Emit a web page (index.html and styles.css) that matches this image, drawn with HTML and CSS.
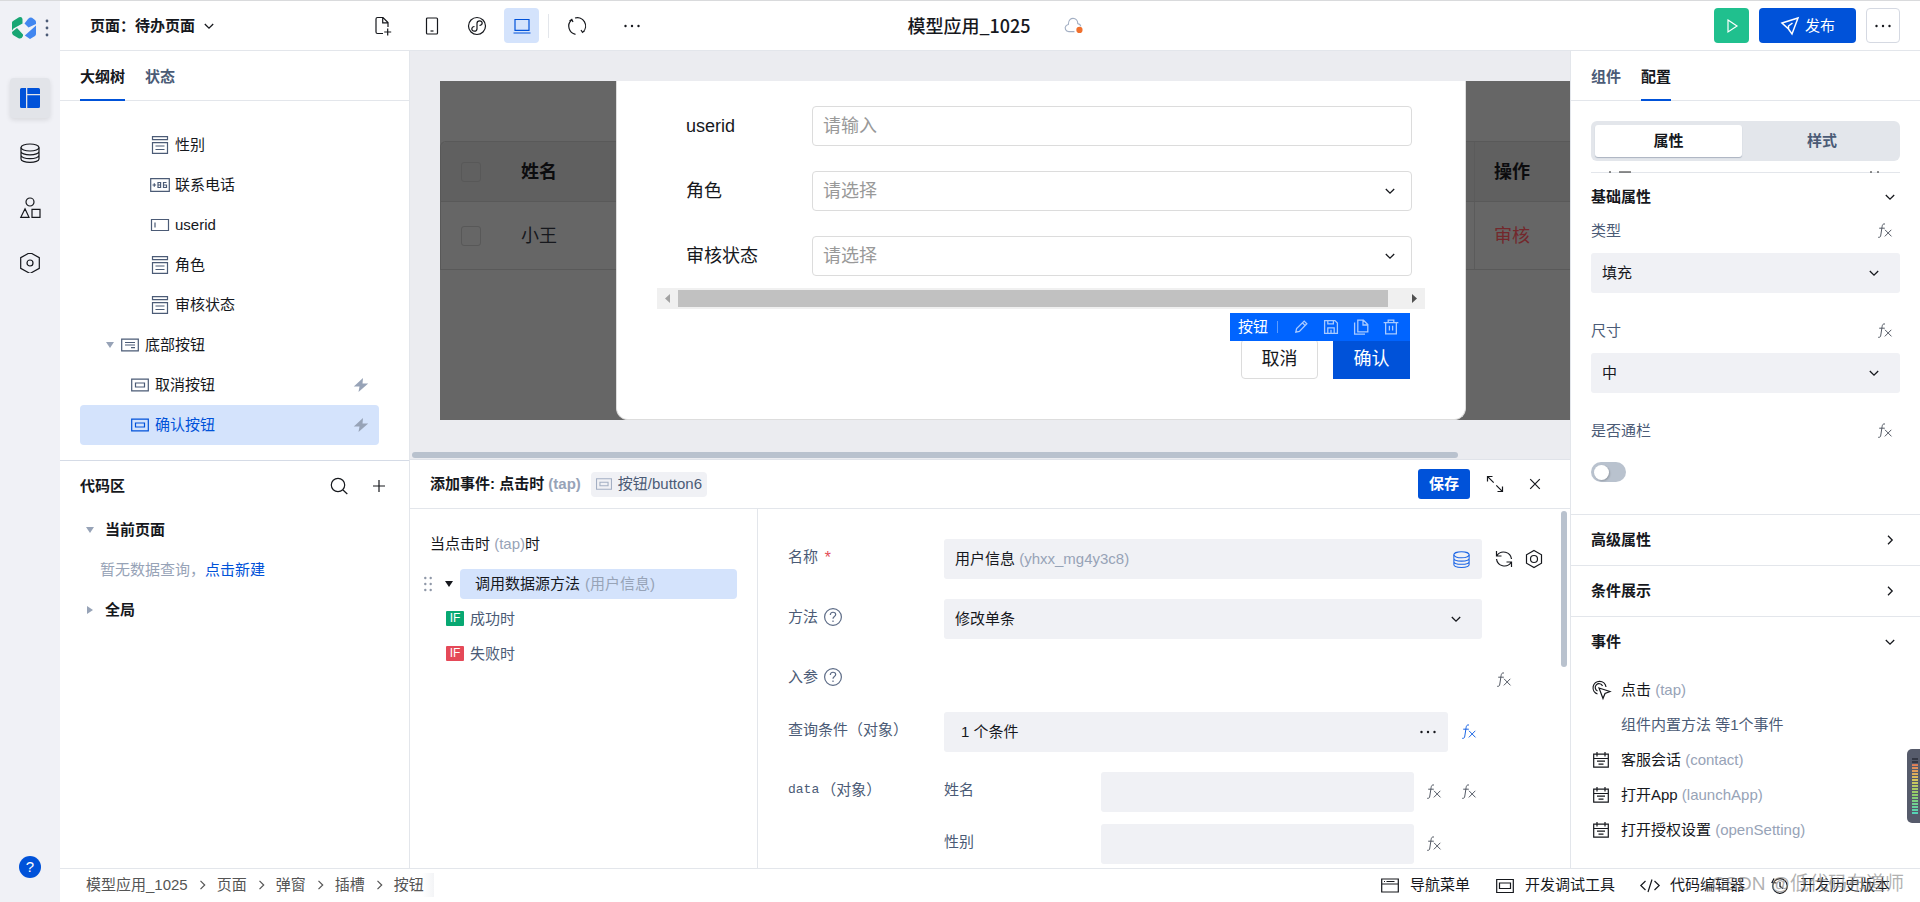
FILE: index.html
```html
<!DOCTYPE html>
<html lang="zh-CN">
<head>
<meta charset="utf-8">
<title>模型应用_1025</title>
<link rel="stylesheet" href="styles.css">
</head>
<body>
<svg class="sprite" aria-hidden="true">
  <symbol id="down" viewBox="0 0 12 12"><path d="M1.800 4 6 8.200 10.200 4"/></symbol>
  <symbol id="right" viewBox="0 0 12 12"><path d="M4 1.800 8.200 6 4 10.200"/></symbol>
  <symbol id="fx" viewBox="0 0 16 16"><path d="M8 1C6 .5 5.400 1.800 5.100 3.600L3.800 12c-.2 1.900-.9 2.600-2.600 2.300M2.200 5.200h5.600M8 6.800l6.500 6.600M14.300 6.800l-6.500 6.600"/></symbol>
  <symbol id="dots" viewBox="0 0 20 20"><g fill="currentColor" stroke="none"><circle cx="3.500" cy="10" r="1.200"/><circle cx="10" cy="10" r="1.200"/><circle cx="16.500" cy="10" r="1.200"/></g></symbol>
  <symbol id="db" viewBox="0 0 20 20"><ellipse cx="10" cy="4.500" rx="9" ry="3.500"/><path d="M1 4.500v11.500c0 1.900 4 3.400 9 3.400s9-1.500 9-3.400V4.500M1 8.500c0 1.900 4 3.400 9 3.400s9-1.500 9-3.400M1 12.300c0 1.900 4 3.400 9 3.400s9-1.500 9-3.400"/></symbol>
  <symbol id="hex" viewBox="0 0 20 20"><path d="M10-.5 19.300 4.700v10.600L10 20.500.7 15.300V4.700z"/><circle cx="10" cy="10" r="3"/></symbol>
  <symbol id="form" viewBox="0 0 20 20"><path d="M2.500 1.700h15v3h-15zM2.500 7.700h15v10.600h-15zM5.500 11h9M5.500 14.500h9"/></symbol>
  <symbol id="btn" viewBox="0 0 20 20"><path d="M1.700 4.200h16.600v11.600H1.700zM5.500 8h9v4h-9z"/></symbol>
  <symbol id="bolt" viewBox="0 0 16 16"><path fill="currentColor" stroke="none" d="M10 1 .8 9.500h5.700L5.500 15l9.700-8.500H9.500z"/></symbol>
  <symbol id="help" viewBox="0 0 20 20"><circle cx="10" cy="10" r="8.400"/><path d="M7.300 8c0-3.600 5.400-3.600 5.400-.4 0 2-2.700 2-2.700 4.200M10 13.400v1.600"/></symbol>
  <symbol id="cal" viewBox="0 0 20 20"><path d="M2.700 4.200h14.600v13H2.700zM2.700 8.500h14.600M6 2v4.500M14 2v4.500M6 11.200h8M7.500 14.200h5"/></symbol>
</svg>

<aside class="rail">
  <div class="brand">
    <svg class="logo" viewBox="0 0 24 22"><path fill="#18a673" d="M0 5.500Q0 4.500 1 4L7 .3Q10-.5 10.500 2v4.500L1.500 11.500 0 13.500zM0 15l5-4 6 6.500V19Q9.500 22.500 6.500 21.300L1 18Q0 17 0 15z"/><path fill="#4287f0" d="M12.500 6.500 16 2Q18 0 20 .7L23 3Q24 4 24 5v2L16.500 10.500zM12.800 18.500 24 8.500V17Q24 18 23 19l-5 3z"/></svg>
    <svg class="grip" viewBox="0 0 4 18"><g fill="#4b5b76"><circle cx="2" cy="2" r="1.400"/><circle cx="2" cy="9" r="1.400"/><circle cx="2" cy="16" r="1.400"/></g></svg>
  </div>
  <nav class="rail-nav">
    <button class="rail-btn active" aria-label="页面设计"><svg viewBox="0 0 20 20"><g fill="#0052d9" stroke="none"><path d="M0 1.500Q0 0 1.500 0H6v20H1.500Q0 20 0 18.500zM7.300 0h11.200Q20 0 20 1.500V6H7.300zM7.300 7.300H20v11.200q0 1.500-1.500 1.500H7.300z"/></g></svg></button>
    <button class="rail-btn" aria-label="数据"><svg><use href="#db"/></svg></button>
    <button class="rail-btn" aria-label="组件"><svg viewBox="0 0 20 20"><circle cx="10" cy="4" r="4"/><path d="M5 10.800 9 19.300H.8zM12 11.300h8v8h-8z"/></svg></button>
    <button class="rail-btn" aria-label="设置"><svg><use href="#hex"/></svg></button>
  </nav>
  <button class="rail-help" aria-label="帮助">?</button>
</aside>

<div class="app">
  <header class="topbar">
    <div class="top-left">
      <button class="page-pick">页面：待办页面 <svg class="i12"><use href="#down"/></svg></button>
      <button class="tool new" aria-label="新建页面"><svg viewBox="0 0 20 20"><path d="M10 17.500H4.500q-1.500 0-1.500-1.500V3q0-1.500 1.500-1.500H10L15 6.500V11M9.700 1.500v5.300H15M14.700 12.500v7M11.200 16h7"/></svg></button>
      <div class="devices">
        <button class="tool" aria-label="手机"><svg viewBox="0 0 20 20"><rect x="4.500" y="2" width="11" height="16" rx="1"/><path d="M8.500 15h3"/></svg></button>
        <button class="tool" aria-label="小程序"><svg viewBox="0 0 20 20"><circle cx="10" cy="10" r="8.500"/><path d="M12.500 9.500c1.500-.2 2.700-1.200 2.700-2.500 0-1.300-1-2.200-2.500-2.200-1.700 0-2.700 1-2.700 2.500v5.400c0 1.500-1.200 2.500-2.700 2.500s-2.500-1-2.500-2.200c0-1.300 1-2.300 2.700-2.500"/></svg></button>
        <button class="tool on" aria-label="电脑"><svg viewBox="0 0 20 20"><path d="M3 3.500h14v10.800H3zM1.500 17h17"/></svg></button>
      </div>
      <span class="divider"></span>
      <button class="tool" aria-label="刷新"><svg viewBox="0 0 20 20"><path d="M4.500 4a8.300 8.300 0 0 0 4 14.300M8 2a8.300 8.300 0 0 1 8 14M2.500 5l2.300-1.500L6 6M17.800 14.500l-2.300 1.800L14 14"/></svg></button>
      <button class="tool more" aria-label="更多"><svg><use href="#dots"/></svg></button>
    </div>
    <div class="top-title"><h1>模型应用_1025</h1>
      <svg class="cloud" viewBox="0 0 20 18"><path stroke="#a3afc3" d="M11 15.500H5C1.500 15.500.3 11.500 2 9.500c.7-1 1.700-1.300 2.500-1.500C4.500 3 7.500 1.500 9.500 1.500c3 0 5 2.500 5 5.500 2 .3 3 1.500 3.300 3"/><circle cx="16.300" cy="13.700" r="3.300" fill="#f0702e" stroke="none"/></svg>
    </div>
    <div class="top-right">
      <button class="run" aria-label="运行"><svg viewBox="0 0 20 20"><path d="M6 4l9 6-9 6z"/></svg></button>
      <button class="publish"><svg viewBox="0 0 20 20"><path d="M2 7 18 2l-6 16-3.500-5zM8.500 13v-3l4-3"/></svg>发布</button>
      <button class="overflow" aria-label="更多操作"><svg><use href="#dots"/></svg></button>
    </div>
  </header>

  <div class="work">
    <section class="left">
      <div class="outline">
        <div class="tabs"><button class="tab active">大纲树</button><button class="tab">状态</button></div>
        <ul class="tree">
          <li class="d3"><svg><use href="#form"/></svg>性别</li>
          <li class="d3"><svg viewBox="0 0 20 20"><path d="M.7 3.700h18.600v12.600H.7z"/><path d="M2.500 10h3.600M4.300 8.200v3.600M8 7.500h2.600v5H8zM8 10h2.600M16.500 7.500h-3v5h3V10h-3"/></svg>联系电话</li>
          <li class="d3"><svg viewBox="0 0 20 20"><path d="M1.500 4.500h17v11h-17zM5 7.500v5"/></svg>userid</li>
          <li class="d3"><svg><use href="#form"/></svg>角色</li>
          <li class="d3"><svg><use href="#form"/></svg>审核状态</li>
          <li class="d1"><i class="caret"></i><svg viewBox="0 0 20 20"><path d="M1.700 4.200h16.600v11.600H1.700zM5 7.500h10M5 10H15M11 12.700h4"/></svg>底部按钮</li>
          <li class="d2"><svg><use href="#btn"/></svg>取消按钮<svg class="bolt"><use href="#bolt"/></svg></li>
          <li class="d2 selected"><svg><use href="#btn"/></svg>确认按钮<svg class="bolt"><use href="#bolt"/></svg></li>
        </ul>
      </div>
      <div class="code">
        <div class="code-head"><h2>代码区</h2>
          <button aria-label="搜索"><svg viewBox="0 0 20 20"><circle cx="9" cy="9" r="6.700"/><path d="M14 14l4.300 4"/></svg></button>
          <button aria-label="新增"><svg viewBox="0 0 20 20"><path d="M10 4v12M4 10h12"/></svg></button>
        </div>
        <div class="code-row"><i class="caret"></i>当前页面</div>
        <p class="code-empty">暂无数据查询，<a href="#new">点击新建</a></p>
        <div class="code-row"><i class="caret side"></i>全局</div>
      </div>
    </section>

    <main class="center">
      <div class="canvas">
        <div class="device">
          <table class="grid">
            <tr><th class="ck"><input type="checkbox" aria-label="全选"></th><th>姓名</th><th class="op">操作</th></tr>
            <tr><td class="ck"><input type="checkbox" aria-label="选择小王"></td><td>小王</td><td class="op"><a href="#audit">审核</a></td></tr>
          </table>
          <div class="dialog">
            <div class="frow"><label for="uid">userid</label><input id="uid" placeholder="请输入"></div>
            <div class="frow"><label for="role">角色</label><span class="pick"><select id="role"><option>请选择</option></select><svg class="i12"><use href="#down"/></svg></span></div>
            <div class="frow"><label for="st">审核状态</label><span class="pick"><select id="st"><option>请选择</option></select><svg class="i12"><use href="#down"/></svg></span></div>
            <div class="hscroll"><svg viewBox="0 0 21 21"><path fill="#a3a3a3" d="M13 6v9l-5-4.500z"/></svg><span class="thumb"></span><svg viewBox="0 0 21 21"><path fill="#505050" d="M8 6v9l5-4.500z"/></svg></div>
            <div class="actions">
              <button class="cancel">取消</button><button class="ok">确认</button>
              <div class="bar"><span>按钮</span>
                <svg viewBox="0 0 20 20"><path d="M3.500 16.500l1-4.500L14 2.700l3.300 3.300L8 15.500zM12 5l3 3"/></svg>
                <svg viewBox="0 0 20 20"><path d="M2 2h13l3 3v13H2zM6 18v-7h8v7M6 2v4h7V2M10 13.500v4"/></svg>
                <svg viewBox="0 0 20 20"><path d="M6 1.500h7L18.500 7v9H6zM12.500 1.500V7.500h6M2 4.500v14.500h13"/></svg>
                <svg viewBox="0 0 20 20"><path d="M.8 4.500h18.400M6.500 4.500V1.500h7V4.500M3.300 4.500v14h13.400V4.500M8 8.500v6M12 8.500v6"/></svg>
              </div>
            </div>
          </div>
        </div>
        <div class="canvas-scroll"></div>
      </div>

      <section class="event">
        <div class="event-head">
          <h2>添加事件: 点击时 <span class="dim">(tap)</span></h2>
          <span class="tag"><svg><use href="#btn"/></svg>按钮/button6</span>
          <button class="save">保存</button>
          <button class="plain" aria-label="展开"><svg viewBox="0 0 20 20"><path d="M2.500 7.500v-5h5M2.700 2.700l6 6M17.500 12.500v5h-5M17.300 17.300l-6-6"/></svg></button>
          <button class="plain" aria-label="关闭"><svg viewBox="0 0 20 20"><path d="M5.200 5.200l9.600 9.600M14.800 5.200l-9.600 9.600"/></svg></button>
        </div>
        <div class="event-body">
          <div class="flow">
            <div class="when">当点击时 <span class="dim">(tap)</span>时</div>
            <div class="step"><svg class="drag" viewBox="0 0 8 16"><g fill="#8f98a8"><circle cx="1.300" cy="2" r="1.200"/><circle cx="6.700" cy="2" r="1.200"/><circle cx="1.300" cy="8" r="1.200"/><circle cx="6.700" cy="8" r="1.200"/><circle cx="1.300" cy="14" r="1.200"/><circle cx="6.700" cy="14" r="1.200"/></g></svg><i class="caret dark"></i><button class="call">调用数据源方法 <span class="dim">(用户信息)</span></button></div>
            <div class="branch"><b>IF</b>成功时</div>
            <div class="branch fail"><b>IF</b>失败时</div>
          </div>
          <div class="params">
            <div class="prow"><span class="plabel">名称<em>*</em></span><button class="field">用户信息&nbsp;<span class="dim">(yhxx_mg4y3c8)</span><svg class="blue"><use href="#db"/></svg></button>
              <span class="acts"><button class="plain" aria-label="刷新"><svg viewBox="0 0 20 20"><path d="M2.500 2v5h5M3 6.500a8 8 0 0 1 14.500 3.500M17.500 18v-5h-5M17 13.500A8 8 0 0 1 2.500 10"/></svg></button><button class="plain" aria-label="设置"><svg viewBox="0 0 20 20"><path d="M10 1.500l7.500 4.300v8.400L10 18.500l-7.500-4.300V5.800z"/><circle cx="10" cy="10" r="3.500"/></svg></button></span></div>
            <div class="prow"><label class="plabel" for="method">方法<svg><use href="#help"/></svg></label><span class="pick"><select id="method"><option>修改单条</option></select><svg class="i12"><use href="#down"/></svg></span><span class="acts"></span></div>
            <div class="prow short"><span class="plabel">入参<svg><use href="#help"/></svg></span><span class="blank"></span><span class="acts"><button class="plain" aria-label="表达式"><svg class="fx"><use href="#fx"/></svg></button></span></div>
            <div class="prow"><span class="plabel">查询条件（对象）</span><button class="field cond">1 个条件<svg><use href="#dots"/></svg></button><span class="acts a2"><button class="plain" aria-label="表达式"><svg class="fx blue"><use href="#fx"/></svg></button></span></div>
            <div class="prow tight"><span class="plabel data"><span class="mono">data</span>（对象）</span><label class="plabel sub" for="xm">姓名</label><input class="field" id="xm"><span class="acts a3"><button class="plain" aria-label="表达式"><svg class="fx"><use href="#fx"/></svg></button><button class="plain" aria-label="对象表达式"><svg class="fx"><use href="#fx"/></svg></button></span></div>
            <div class="prow"><span class="plabel"></span><label class="plabel sub" for="xb">性别</label><input class="field" id="xb"><span class="acts a3"><button class="plain" aria-label="表达式"><svg class="fx"><use href="#fx"/></svg></button></span></div>
            <div class="vscroll"></div>
          </div>
        </div>
      </section>
    </main>

    <section class="right">
      <div class="tabs"><button class="tab">组件</button><button class="tab active">配置</button></div>
      <div class="seg"><button class="on">属性</button><button class="off">样式</button></div>
      <svg class="cut" viewBox="0 0 309 3" preserveAspectRatio="none"><path d="M0 2.500h309" stroke="#e3e6eb"/><path d="M18 2h2M28 2h12M279 2h2M286 2h2" stroke="#222"/></svg>
      <div class="basic">
        <h3>基础属性<svg class="i12"><use href="#down"/></svg></h3>
        <div class="prop first"><label for="kind">类型</label><svg class="fx"><use href="#fx"/></svg></div>
        <span class="pick"><select id="kind"><option>填充</option></select><svg class="i12"><use href="#down"/></svg></span>
        <div class="prop"><label for="size">尺寸</label><svg class="fx"><use href="#fx"/></svg></div>
        <span class="pick"><select id="size"><option>中</option></select><svg class="i12"><use href="#down"/></svg></span>
        <div class="prop"><label for="full">是否通栏</label><svg class="fx"><use href="#fx"/></svg></div>
        <input type="checkbox" class="switch" id="full">
      </div>
      <h3 class="fold">高级属性<svg class="i12"><use href="#right"/></svg></h3>
      <h3 class="fold">条件展示<svg class="i12"><use href="#right"/></svg></h3>
      <h3 class="fold">事件<svg class="i12"><use href="#down"/></svg></h3>
      <ul class="events">
        <li><svg viewBox="0 0 20 20"><path d="M8 8l11 3.500-5 2-2 5zM6.500 14A6.500 6.500 0 1 1 15 7M6.500 11A3.800 3.800 0 1 1 11.500 6"/></svg>点击&nbsp;<span class="dim">(tap)</span></li>
        <li class="child">组件内置方法 等1个事件</li>
        <li><svg><use href="#cal"/></svg>客服会话&nbsp;<span class="dim">(contact)</span></li>
        <li><svg><use href="#cal"/></svg>打开App&nbsp;<span class="dim">(launchApp)</span></li>
        <li><svg><use href="#cal"/></svg>打开授权设置&nbsp;<span class="dim">(openSetting)</span></li>
      </ul>
    </section>
  </div>

  <footer class="status">
    <nav class="crumbs"><a href="#a">模型应用_1025</a><svg><use href="#right"/></svg><a href="#b">页面</a><svg><use href="#right"/></svg><a href="#c">弹窗</a><svg><use href="#right"/></svg><a href="#d">插槽</a><svg><use href="#right"/></svg><a href="#e" class="last">按钮</a></nav>
    <div class="tools">
      <button><svg viewBox="0 0 20 20"><path d="M1.700 4h16.600v13H1.700zM1.700 9h16.600M4 6.500h1M6.500 6.500h8"/></svg>导航菜单</button>
      <button><svg viewBox="0 0 20 20"><path d="M1.700 4.500h16.600v13H1.700zM4.500 8h11v5.500h-11z"/></svg>开发调试工具</button>
      <button><svg viewBox="0 0 20 20"><path d="M5.500 6 .8 10.500 5.500 15M14.500 6l4.700 4.500-4.700 4.500M12 4.500 8 17"/></svg>代码编辑器</button>
      <button><svg viewBox="0 0 20 20"><circle cx="10" cy="11" r="7.300"/><path d="M10 7v4.500l3 2M4 3.500 2 7.500l4.500.5"/></svg>开发历史版本</button>
    </div>
    <span class="mark">CSDN @低代码布道师</span>
  </footer>
</div>
<div class="meter"><span></span></div>
</body>
</html>
```
FILE: styles.css
```css
* { box-sizing: border-box; }
body {
  margin: 0;
  height: 100vh;
  display: flex;
  overflow: hidden;
  border-top: 1px solid #d9dadc;
  background: #fff;
  color: #16181d;
  font: 15px/20px "Liberation Sans", "Noto Sans CJK SC", sans-serif;
}
button, input, select { font: inherit; color: inherit; margin: 0; }
button { border: 0; padding: 0; background: none; display: inline-flex; align-items: center; flex: none; white-space: nowrap; }
h1, h2, h3, p, ul { margin: 0; padding: 0; list-style: none; }
h2, h3 { font-size: 15px; font-weight: 700; }
a { color: inherit; text-decoration: none; }
svg { width: 20px; height: 20px; flex: none; fill: none; stroke: currentColor; stroke-width: 1.2; overflow: visible; }
.sprite { position: absolute; width: 0; height: 0; }
.i12 { width: 12px; height: 12px; stroke-width: 1.3; }
.fx { width: 16px; height: 16px; stroke: #555b66; stroke-width: 1; }
.dim { color: #97a3b7; }
.blue, .fx.blue { stroke: #1c66e5; }
.caret { width: 0; height: 0; border: 4px solid transparent; border-top: 6px solid #97a3b7; border-bottom: 0; }
.caret.dark { border-top-color: #16181d; }
.caret.side { border: 4px solid transparent; border-left: 6px solid #97a3b7; border-right: 0; }

/* Icon rail */
.rail { flex: none; width: 60px; background: #f0f1f6; display: flex; flex-direction: column; align-items: center; padding: 15px 0 24px; }
.brand { display: flex; align-items: center; align-self: stretch; justify-content: flex-end; gap: 9px; padding-right: 11px; height: 24px; margin-bottom: 38px; }
.logo { width: 24px; height: 22px; stroke: none; }
.grip { width: 4px; height: 18px; stroke: none; }
.rail-nav { display: flex; flex-direction: column; gap: 15px; }
.rail-btn { width: 40px; height: 40px; border-radius: 4px; justify-content: center; }
.rail-btn.active { background: #e2e4e9; box-shadow: 0 2px 5px #0000001a; }
.rail-help { margin-top: auto; width: 22px; height: 22px; border-radius: 50%; background: #0052d9; color: #fff; justify-content: center; }

/* Header */
.app { flex: 1; min-width: 0; display: flex; flex-direction: column; }
.topbar { flex: none; height: 50px; border-bottom: 1px solid #e3e6eb; padding: 0 20px 0 30px; display: grid; grid-template-columns: 1fr auto 1fr; align-items: center; }
.top-left, .top-title, .top-right, .devices { display: flex; align-items: center; }
.page-pick { font-weight: 700; gap: 8px; }
.tool { width: 35px; height: 35px; border-radius: 4px; justify-content: center; }
.tool.new { margin-left: 150px; margin-right: 14px; }
.tool.on { background: #d4e3fc; color: #0052d9; }
.tool.more { margin-left: 20px; }
.devices { gap: 10px; }
.divider { width: 1px; height: 24px; background: #e3e6eb; margin: 0 10px 0 9px; }
.top-title { gap: 33px; }
.top-title h1 { font: 500 18px/24px "Noto Sans CJK SC", sans-serif; padding-bottom: 2px; }
.cloud { width: 19px; height: 17px; }
.top-right { justify-content: flex-end; gap: 10px; }
.top-right button { height: 35px; border-radius: 4px; justify-content: center; }
.run { width: 35px; background: #20c08e; color: #fff; }
.publish { width: 97px; gap: 5px; background: #0052d9; color: #fff; }
.top-right .publish svg { stroke-width: 1.5; }
.overflow { width: 34px; }
.top-right .overflow { border: 1px solid #d5d9e2; }

.work { flex: 1; min-height: 0; display: flex; }
.tabs { height: 50px; padding-left: 20px; display: flex; gap: 20px; border-bottom: 1px solid #e3e6eb; }
.tab { height: 50px; padding-top: 4px; border-bottom: 2px solid transparent; font-weight: 700; color: #4b5b76; }
.tab.active { color: #16181d; border-color: #0052d9; }

/* Outline and code */
.left { flex: none; width: 350px; border-right: 1px solid #e3e6eb; display: flex; flex-direction: column; }
.outline { border-bottom: 1px solid #d5dbe6; padding-bottom: 15px; }
.tree { padding: 24px 30px 0 20px; }
.tree li { height: 40px; display: flex; align-items: center; gap: 5px; padding-right: 10px; border-radius: 4px; }
.tree svg { stroke: #4b5b76; }
.tree .d3 { padding-left: 70px; }
.tree .d2 { padding-left: 50px; }
.tree .d1 { padding-left: 26px; }
.tree .d1 svg { margin-left: 1px; }
.tree .bolt { width: 16px; height: 16px; margin-left: auto; color: #97a3b7; }
.tree .selected { background: #d4e3fc; color: #0052d9; }
.tree .selected svg { stroke: #0052d9; }
.code-head { height: 49px; padding: 0 20px; display: flex; align-items: center; gap: 20px; }
.code-head h2 { margin-right: auto; }
.code-row { height: 40px; padding-left: 26px; display: flex; align-items: center; gap: 11px; font-weight: 700; }
.code-row .side { margin: 0 1px; }
.code-empty { padding-left: 40px; line-height: 40px; color: #97a3b7; }
.code-empty a { color: #0052d9; }

/* Canvas */
.center { flex: 1; min-width: 0; display: flex; flex-direction: column; }
.canvas { flex: none; background: #ebecf0; padding: 30px 0 1px 30px; border-bottom: 1px solid #e0e3e9; }
.device { position: relative; background: #666; padding-top: 60px; height: 339px; font-size: 18px; line-height: 24px; overflow: hidden; }
.grid { width: 100%; border-collapse: separate; border-spacing: 0; border-top: 1px solid #595959; border-left: 1px solid #595959; border-top-left-radius: 6px; }
.grid th, .grid td { text-align: left; padding: 0; height: 68px; border-bottom: 1px solid #595959; }
.grid th { height: 60px; background: #606060; color: #0c0c0e; }
.grid th:first-child { border-top-left-radius: 6px; }
.grid .ck { width: 80px; padding-left: 20px; }
.grid .op { width: 96px; padding-left: 19px; border-left: 1px solid #5b5b5b; }
.grid .op a { color: #73282c; }
.grid input { appearance: none; display: block; width: 20px; height: 20px; border: 1px solid #585858; border-radius: 3px; }
.dialog { position: absolute; top: 0; bottom: 0; left: 176px; right: 104px; background: #fff; border: 1px solid #ddd; border-top: 0; border-radius: 0 0 12px 12px; padding: 25px 40px 0; }
.frow { display: flex; align-items: center; height: 40px; margin: 0 13px 25px 29px; }
.frow label { flex: none; width: 126px; }
.frow input, .frow select { width: 100%; height: 40px; border: 1px solid #dcdcdc; border-radius: 4px; padding: 0 10px; background: #fff; color: #999; }
.frow input::placeholder { color: #999; }
.pick { position: relative; flex: 1; display: block; }
.pick select { appearance: none; display: block; width: 100%; height: 40px; }
.pick .i12 { position: absolute; right: 16px; top: 14px; pointer-events: none; }
.hscroll { display: flex; align-items: center; height: 21px; margin-top: -13px; background: #f0f0f0; }
.hscroll svg { width: 21px; height: 21px; stroke: none; }
.hscroll .thumb { flex: 1; height: 17px; margin-right: 16px; background: #c1c1c1; }
.actions { position: relative; display: flex; justify-content: flex-end; gap: 15px; margin: 30px 15px 0 0; }
.actions button { width: 77px; height: 40px; justify-content: center; }
.cancel { border-radius: 4px; }
.actions .cancel { border: 1px solid #dcdcdc; }
.ok { background: #0052d9; color: #fff; }
.bar { position: absolute; right: 0; bottom: 38px; width: 180px; height: 28px; background: #0064ff; color: #fff; font-size: 15px; display: flex; align-items: center; gap: 14px; padding: 0 11px 0 8px; }
.bar span { margin-right: auto; border-right: 1px solid #5c9cff; padding-right: 9px; line-height: 12px; }
.bar svg { width: 16px; height: 16px; color: #a8caff; stroke-width: 1.6; }
.canvas-scroll { height: 6px; width: 1046px; max-width: 100%; margin: 32px 0 0 -28px; border-radius: 3px; background: #b9c2ce; }

/* Event editor */
.event { flex: 1; min-height: 0; display: flex; flex-direction: column; }
.event-head { flex: none; height: 49px; display: flex; align-items: center; padding: 0 25px 0 20px; border-bottom: 1px solid #e3e6eb; }
.tag { display: flex; align-items: center; gap: 4px; height: 25px; margin-left: 10px; padding: 0 5px 0 3px; background: #f0f1f5; border-radius: 4px; color: #4b5b76; }
.tag svg { width: 20px; height: 18px; stroke: #a3afc3; }
.save { margin-left: auto; width: 52px; height: 30px; border-radius: 3px; background: #0052d9; color: #fff; font-weight: 700; justify-content: center; }
.event-head .plain { margin-left: 15px; }
.event-head .plain + .plain { margin-left: 20px; }
.event-body { flex: 1; min-height: 0; display: flex; }
.flow { flex: none; width: 348px; border-right: 1px solid #e3e6eb; padding: 20px 20px 0; }
.when { line-height: 30px; margin-bottom: 10px; }
.step { display: flex; align-items: center; margin: 0 0 2px -6px; }
.drag { width: 8px; height: 16px; margin-right: 13px; stroke: none; }
.call { flex: 1; height: 30px; margin-left: 7px; padding-left: 15px; background: #d4e3fc; border-radius: 4px; gap: 5px; }
.branch { height: 35px; display: flex; align-items: center; gap: 6px; padding-left: 16px; color: #4b5b76; }
.branch b { width: 18px; height: 15px; background: #07a872; color: #fff; font: 12px/15px "Liberation Sans", sans-serif; text-align: center; border-radius: 1px; }
.branch.fail b { background: #e54958; }
.params { position: relative; flex: 1; min-width: 0; overflow: hidden; padding: 30px 0 0 30px; }
.prow { display: flex; height: 40px; margin-bottom: 20px; }
.prow.short { height: 33px; }
.prow.tight { margin-bottom: 12px; }
.plabel { flex: none; width: 156px; height: 36px; display: flex; align-items: center; gap: 5px; color: #4b5b76; white-space: nowrap; }
.plabel.sub { width: 157px; }
.plabel.data { gap: 2px; }
.plabel em { color: #e34d59; font: 16px/20px "Liberation Mono", monospace; padding-top: 4px; }
.plabel svg { stroke: #5d6c87; }
.mono { font: 13px/20px "Liberation Mono", monospace; }
.field, .blank { flex: 1; min-width: 0; }
.field, .params select, .right select { height: 40px; border: 0; border-radius: 3px; background: #f0f1f5; padding: 0 11px; }
.field svg { margin-left: auto; }
.field .blue { width: 17px; height: 17px; margin-right: 1px; }
.cond { padding-left: 17px; padding-right: 10px; }
.acts { flex: none; width: 88px; padding-left: 12px; display: flex; align-items: center; gap: 10px; }
.acts .plain { width: 20px; justify-content: center; }
.short .acts { height: 42px; }
.a2 { width: 122px; padding-left: 11px; }
.a3 { width: 156px; padding-left: 10px; gap: 15px; }
.vscroll { position: absolute; top: 2px; right: 3px; width: 6px; height: 156px; border-radius: 3px; background: #b9c2ce; }
.params .i12 { right: 20px; }

/* Inspector */
.right { flex: none; width: 350px; border-left: 1px solid #e3e6eb; }
.seg { display: grid; grid-template-columns: 147px 1fr; margin: 20px 20px 9px; padding: 4px; height: 40px; border-radius: 6px; background: #e3e6eb; }
.seg button { justify-content: center; border-radius: 3px; color: #4b5b76; font-weight: 700; }
.seg .on { background: #fff; color: #16181d; box-shadow: 0 1px 1px #aab2c0; }
.seg .off { padding-left: 6px; }
.cut { display: block; width: calc(100% - 40px); height: 3px; margin: 0 20px; stroke-width: 1; overflow: hidden; }
.basic { padding: 8px 20px 32px; }
.right h3 { display: flex; align-items: center; justify-content: space-between; height: 32px; padding-right: 4px; }
.prop { display: flex; align-items: center; justify-content: space-between; height: 35px; margin: 20px 0 5px; padding-right: 7px; color: #4b5b76; }
.prop.first { margin-top: 0; }
.basic .pick .i12 { right: 20px; }
.switch { appearance: none; display: block; width: 35px; height: 20px; margin-top: 14px; border-radius: 10px; background: #b9c2ce; padding: 3px; }
.switch::before { content: ""; display: block; width: 15px; height: 15px; border-radius: 50%; background: #fff; box-shadow: 1px 1px 2px #0003; }
.right .fold { height: 51px; padding: 0 24px 0 20px; border-top: 1px solid #e3e6eb; }
.events { padding: 5px 20px 0; }
.events li { height: 35px; display: flex; align-items: center; }
.events svg { margin-right: 10px; }
.events .child { padding-left: 30px; color: #4b5b76; }

/* Status bar */
.status { position: relative; flex: none; height: 34px; border-top: 1px solid #e3e6eb; display: flex; align-items: center; justify-content: space-between; padding: 0 30px 2px 26px; }
.crumbs { display: flex; align-items: center; gap: 8px; color: #555; }
.crumbs svg { width: 13px; height: 12px; }
.crumbs .last { padding: 2px 10px 2px 0; background: linear-gradient(90deg, #fff 70%, #f3f4f6); }
.tools { display: flex; gap: 25px; }
.tools button { gap: 10px; }
.mark { position: absolute; right: 16px; bottom: 6px; font-size: 19px; line-height: 24px; color: #8e8e8eb0; }
.meter { position: absolute; right: 0; top: 749px; width: 13px; height: 74px; padding: 8px 2px 8px 5px; border-radius: 5px 0 0 5px; background: #565b6b; }
.meter span { display: block; height: 100%; background: repeating-linear-gradient(#565b6b 0 1px, transparent 1px 3px), linear-gradient(#333744 12%, #e27f5a 13%, #d9c45c 38%, #8fd06a 65%, #4fd3bd); }
```
